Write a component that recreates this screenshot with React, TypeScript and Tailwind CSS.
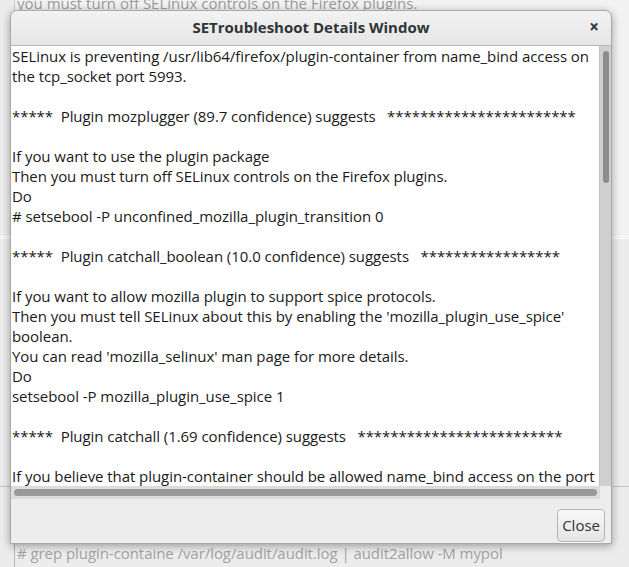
const lines: string[] = [
  "SELinux is preventing /usr/lib64/firefox/plugin-container from name_bind access on",
  "the tcp_socket port 5993.",
  "",
  "*****  Plugin mozplugger (89.7 confidence) suggests   ***********************",
  "",
  "If you want to use the plugin package",
  "Then you must turn off SELinux controls on the Firefox plugins.",
  "Do",
  "# setsebool -P unconfined_mozilla_plugin_transition 0",
  "",
  "*****  Plugin catchall_boolean (10.0 confidence) suggests   *****************",
  "",
  "If you want to allow mozilla plugin to support spice protocols.",
  "Then you must tell SELinux about this by enabling the 'mozilla_plugin_use_spice'",
  "boolean.",
  "You can read 'mozilla_selinux' man page for more details.",
  "Do",
  "setsebool -P mozilla_plugin_use_spice 1",
  "",
  "*****  Plugin catchall (1.69 confidence) suggests   *************************",
  "",
  "If you believe that plugin-container should be allowed name_bind access on the port",
];

function Background() {
  return (
    <div className="flex flex-col h-full">
      <div className="flex h-[236px]">
        <div className="w-[14px] shrink-0" />
        <div className="flex-1 border-l border-[#c8c8c8] bg-[#f2f2f2] px-[2px] text-[15px] leading-[20px] text-[#9a9a9a] -mt-[7px]">
          you must turn off SELinux controls on the Firefox plugins.
        </div>
      </div>
      <div className="h-[3px] border-t border-white border-b border-[#c4c4c4]" />
      <div className="h-[247px]" />
      <div className="h-px bg-[#c4c4c4]" />
      <div className="flex-1 flex">
        <div className="w-[14px] shrink-0" />
        <div className="flex-1 border-l border-[#b8b8b8] pt-[56px] px-[2px] text-[15px] leading-[20px] text-[#a2a2a2] tracking-[-0.06px]">
          # grep plugin-containe /var/log/audit/audit.log | audit2allow -M mypol
        </div>
      </div>
    </div>
  );
}

export default function App() {
  return (
    <div className="relative w-[629px] h-[567px] overflow-hidden bg-[#ececec] font-['Open_Sans',sans-serif]">
      <Background />

      <div className="absolute left-[10px] top-[10px] w-[602px] h-[534px] flex flex-col bg-[#ededed] border border-[#a8a8a8] rounded-t-[7px] shadow-[0_2px_8px_rgba(0,0,0,0.35)]">
        <div className="h-[35px] shrink-0 flex items-center justify-center relative rounded-t-[7px] bg-gradient-to-b from-[#f2f2f2] to-[#e6e6e6] border-b border-[#b6b6b6]">
          <span className="text-[15px] font-bold text-[#2e3436] -mt-[1px]">SETroubleshoot Details Window</span>
          <span className="absolute right-[12px] top-[6px] text-[17px] font-bold text-[#2e3436] leading-[20px]">×</span>
        </div>

        <div className="flex h-[440px] shrink-0">
          <div className="flex-1 bg-white overflow-hidden pl-[1px] text-[15px] leading-[20px] text-[#1a1a1a] whitespace-pre tracking-[-0.06px]">
            {lines.map((l, i) => (
              <div key={i} className="h-[20px]">{l}</div>
            ))}
          </div>
          <div className="w-[12px] bg-[#cfcfcf] border-l border-[#c2c2c2] pt-[5px] flex justify-center">
            <div className="w-[6px] h-[132px] rounded-full bg-[#8c8c8c]" />
          </div>
        </div>

        <div className="h-[13px] shrink-0 flex items-center">
          <div className="w-[589px] h-full bg-[#dcdcdc] flex items-center px-[3px]">
            <div className="w-full h-[7px] rounded-full bg-[#999999]" />
          </div>
        </div>

        <div className="flex-1 flex items-start justify-end pt-[10px] pr-[6px]">
          <button className="h-[33px] px-[4px] rounded-[4px] border border-[#b4b4b4] bg-gradient-to-b from-[#f8f8f8] to-[#e4e4e4] text-[15px] text-[#2e3436] shadow-[0_1px_0_rgba(255,255,255,0.8)]">
            Close
          </button>
        </div>
      </div>
    </div>
  );
}
